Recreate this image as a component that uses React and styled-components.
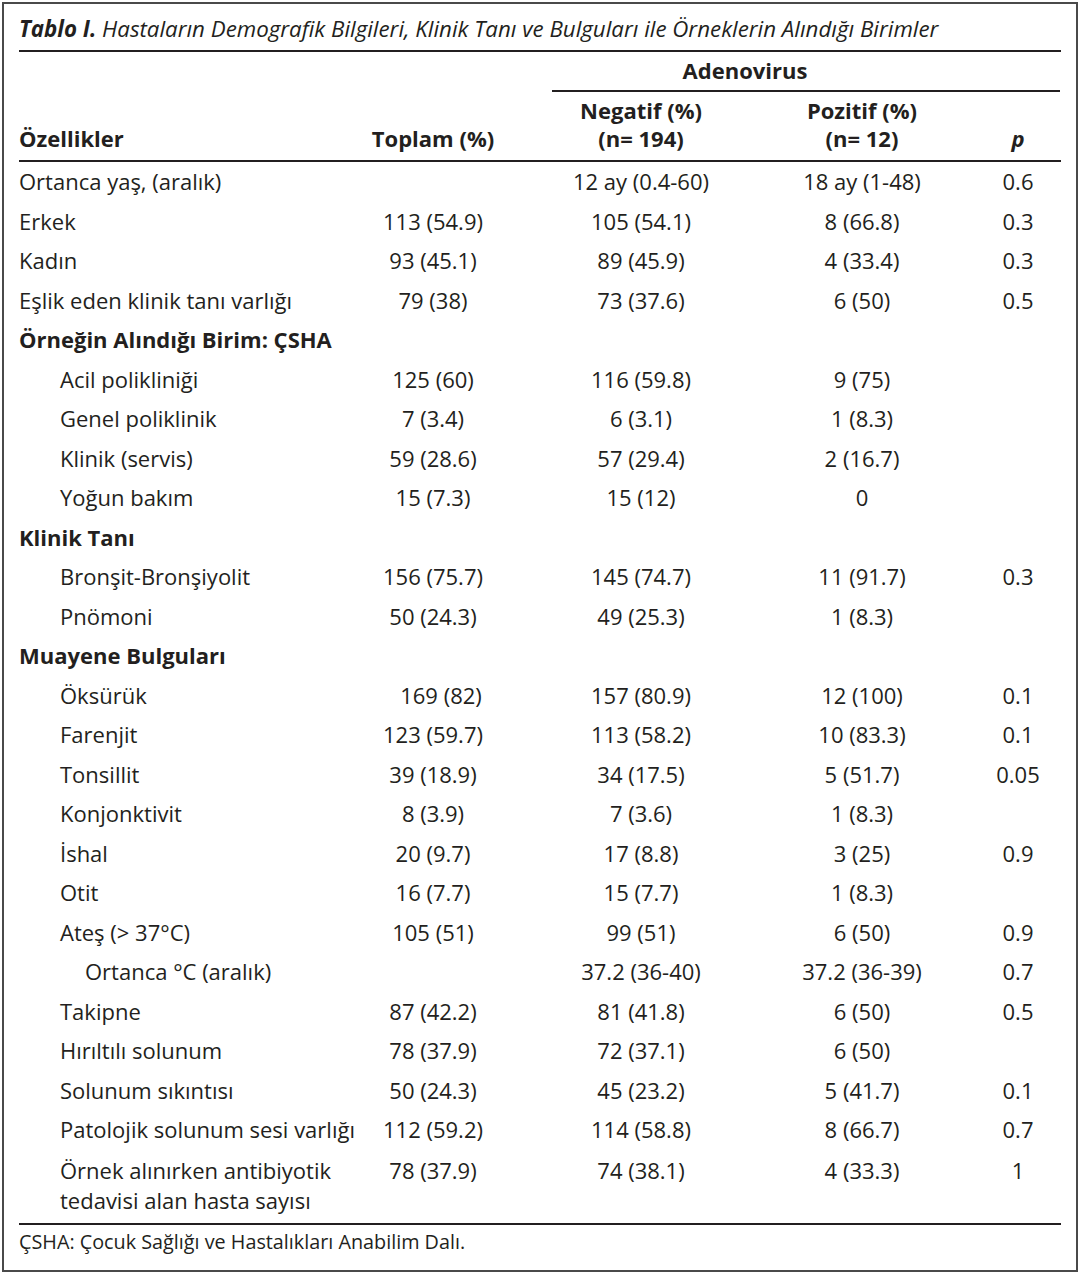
import React from 'react';
import styled, { createGlobalStyle } from 'styled-components';

const GlobalStyle = createGlobalStyle`
  html, body {
    margin: 0;
    padding: 0;
    background: #ffffff;
  }
  body {
    font-family: "Open Sans", Lato, sans-serif;
    color: #231f20;
  }
`;

const Frame = styled.div`
  box-sizing: border-box;
  width: 1076px;
  height: 1270px;
  margin: 2px 0 0 2px;
  border: 2px solid #4a4a4a;
  padding: 0 15px;
  font-size: 22px;
`;

const Caption = styled.div`
  padding: 10px 0 6px;
  line-height: 30px;
  font-style: italic;
  font-size: 22.3px;
  white-space: nowrap;
  border-bottom: 2px solid #231f20;
`;

const CaptionLabel = styled.b`
  font-weight: 700;
`;

const Grid = styled.div`
  display: grid;
  grid-template-columns: 349px 130px 286px 156px 120px;
`;

const HeadGroup = styled(Grid)`
  border-bottom: 2px solid #231f20;
`;

const GroupTitle = styled.div`
  grid-column: 3 / 6;
  margin-left: 54px;
  padding: 3px 122px 5px 0;
  line-height: 30px;
  text-align: center;
  font-weight: 700;
  border-bottom: 2px solid #231f20;
`;

const HeadCell = styled.div`
  padding: 3.5px 0 8.5px;
  line-height: 28px;
  font-weight: 700;
  text-align: ${(p) => (p.$left ? 'left' : 'center')};
  padding-left: ${(p) => (p.$pcol ? '36px' : '0')};
  font-style: ${(p) => (p.$italic ? 'italic' : 'normal')};
  align-self: end;
  white-space: nowrap;
`;

const Row = styled(Grid)`
  line-height: 39.5px;
  ${(p) => p.$tall && 'line-height: 30px; padding: 5px 0 8px;'}
`;

const Label = styled.div`
  padding-left: ${(p) => p.$indent || 0}px;
  font-weight: ${(p) => (p.$bold ? 700 : 400)};
  white-space: nowrap;
`;

const Cell = styled.div`
  text-align: center;
  white-space: nowrap;
  padding-left: ${(p) => p.$pad || 0}px;
`;

const Body = styled.div`
  border-bottom: 2px solid #231f20;
`;

const Footnote = styled.div`
  padding-top: 2px;
  line-height: 30px;
  font-size: 19.8px;
`;

const rows = [
  ['Ortanca yaş, (aralık)', '', '12 ay (0.4-60)', '18 ay (1-48)', '0.6'],
  ['Erkek', '113 (54.9)', '105 (54.1)', '8 (66.8)', '0.3'],
  ['Kadın', '93 (45.1)', '89 (45.9)', '4 (33.4)', '0.3'],
  ['Eşlik eden klinik tanı varlığı', '79 (38)', '73 (37.6)', '6 (50)', '0.5'],
  { section: 'Örneğin Alındığı Birim: ÇSHA' },
  ['Acil polikliniği', '125 (60)', '116 (59.8)', '9 (75)', '', 1],
  ['Genel poliklinik', '7 (3.4)', '6 (3.1)', '1 (8.3)', '', 1],
  ['Klinik (servis)', '59 (28.6)', '57 (29.4)', '2 (16.7)', '', 1],
  ['Yoğun bakım', '15 (7.3)', '15 (12)', '0', '', 1],
  { section: 'Klinik Tanı' },
  ['Bronşit-Bronşiyolit', '156 (75.7)', '145 (74.7)', '11 (91.7)', '0.3', 1],
  ['Pnömoni', '50 (24.3)', '49 (25.3)', '1 (8.3)', '', 1],
  { section: 'Muayene Bulguları' },
  ['Öksürük', '169 (82)', '157 (80.9)', '12 (100)', '0.1', 1, 16],
  ['Farenjit', '123 (59.7)', '113 (58.2)', '10 (83.3)', '0.1', 1],
  ['Tonsillit', '39 (18.9)', '34 (17.5)', '5 (51.7)', '0.05', 1],
  ['Konjonktivit', '8 (3.9)', '7 (3.6)', '1 (8.3)', '', 1],
  ['İshal', '20 (9.7)', '17 (8.8)', '3 (25)', '0.9', 1],
  ['Otit', '16 (7.7)', '15 (7.7)', '1 (8.3)', '', 1],
  ['Ateş (> 37°C)', '105 (51)', '99 (51)', '6 (50)', '0.9', 1],
  ['Ortanca °C (aralık)', '', '37.2 (36-40)', '37.2 (36-39)', '0.7', 2],
  ['Takipne', '87 (42.2)', '81 (41.8)', '6 (50)', '0.5', 1],
  ['Hırıltılı solunum', '78 (37.9)', '72 (37.1)', '6 (50)', '', 1],
  ['Solunum sıkıntısı', '50 (24.3)', '45 (23.2)', '5 (41.7)', '0.1', 1],
  ['Patolojik solunum sesi varlığı', '112 (59.2)', '114 (58.8)', '8 (66.7)', '0.7', 1],
];

const indents = [0, 41, 66];

export default function App() {
  return (
    <>
      <GlobalStyle />
      <Frame>
        <Caption>
          <CaptionLabel>Tablo I.</CaptionLabel> Hastaların Demografik Bilgileri, Klinik Tanı ve
          Bulguları ile Örneklerin Alındığı Birimler
        </Caption>
        <HeadGroup>
          <GroupTitle>Adenovirus</GroupTitle>
          <HeadCell $left>Özellikler</HeadCell>
          <HeadCell>Toplam (%)</HeadCell>
          <HeadCell>
            Negatif (%)
            <br />
            (n= 194)
          </HeadCell>
          <HeadCell>
            Pozitif (%)
            <br />
            (n= 12)
          </HeadCell>
          <HeadCell $pcol $italic>p</HeadCell>
        </HeadGroup>
        <Body>
          {rows.map((r, i) =>
            r.section ? (
              <Row key={i}>
                <Label $bold>{r.section}</Label>
              </Row>
            ) : (
              <Row key={i}>
                <Label $indent={indents[r[5] || 0]}>{r[0]}</Label>
                <Cell $pad={r[6]}>{r[1]}</Cell>
                <Cell>{r[2]}</Cell>
                <Cell>{r[3]}</Cell>
                <Cell $pad={36}>{r[4]}</Cell>
              </Row>
            )
          )}
          <Row $tall>
            <Label $indent={indents[1]}>
              Örnek alınırken antibiyotik
              <br />
              tedavisi alan hasta sayısı
            </Label>
            <Cell>78 (37.9)</Cell>
            <Cell>74 (38.1)</Cell>
            <Cell>4 (33.3)</Cell>
            <Cell $pad={36}>1</Cell>
          </Row>
        </Body>
        <Footnote>ÇSHA: Çocuk Sağlığı ve Hastalıkları Anabilim Dalı.</Footnote>
      </Frame>
    </>
  );
}
